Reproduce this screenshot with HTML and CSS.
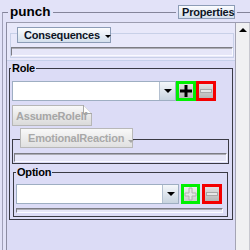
FILE: index.html
```html
<!DOCTYPE html>
<html lang="en">
<head>
    <meta charset="UTF-8">
    <title>punch</title>
    <link rel="stylesheet" href="styles.css">
</head>
<body>
    <div class="punch">
        <div class="punch-head">
            <span class="punch-title">punch</span>
            <span class="btn props">Properties</span>
        </div>
        <div class="scroll">
            <div class="content">
                <div class="band">
                    <div class="grp light">
                        <div class="grp-head conseq-head">
                            <span class="btn menu conseq">Consequences<i class="tri"></i></span>
                        </div>
                        <div class="slot"></div>
                    </div>
                </div>
                <div class="lower">
                    <div class="grp dark role">
                        <div class="grp-title">Role</div>
                        <div class="combo-row role-row">
                            <div class="combo"><span class="combo-field"></span><span class="combo-arrow"><i class="tri"></i></span></div>
                            <span class="sq add">
                                <svg width="14" height="14" viewBox="0 0 14 14"><path d="M7 1v12M1 7h12" stroke="#000" stroke-width="3"/></svg>
                            </span>
                            <span class="sq del">
                                <svg width="14" height="14" viewBox="0 0 14 14"><rect x="1.5" y="5.5" width="11" height="3" fill="#e6e6e6" stroke="#a8a8a8"/></svg>
                            </span>
                        </div>
                        <div class="note"><span class="note-text">AssumeRoleIf</span></div>
                        <div class="grp dark emo">
                            <div class="grp-head emo-head">
                                <span class="btn menu off emo-btn">EmotionalReaction<i class="tri"></i></span>
                            </div>
                            <div class="slot"></div>
                        </div>
                        <div class="grp dark option">
                            <div class="grp-title opt-title">Option</div>
                            <div class="combo-row opt-row">
                                <div class="combo"><span class="combo-field"></span><span class="combo-arrow"><i class="tri"></i></span></div>
                                <span class="sq add">
                                    <svg width="13" height="14" viewBox="0 0 13 14"><path d="M5 1h3v5h4v3H8v4H5V9H1V6h4z" fill="#e4e4e4" stroke="#b0b0b0"/></svg>
                                </span>
                                <span class="sq del">
                                    <svg width="14" height="14" viewBox="0 0 14 14"><rect x="1.5" y="5.5" width="11" height="3" fill="#e6e6e6" stroke="#a8a8a8"/></svg>
                                </span>
                            </div>
                            <div class="slot thin"></div>
                        </div>
                    </div>
                </div>
            </div>
            <div class="vbar">
                <div class="vbar-up"><i class="tri up"></i></div>
            </div>
        </div>
    </div>
</body>
</html>
```
FILE: styles.css
```css
* {
    box-sizing: border-box;
}
body {
    margin: 0;
    background-color: #e2e2f8;
    font-family: "Liberation Sans", Arial, sans-serif;
    font-size: 11px;
    font-weight: bold;
    letter-spacing: -0.2px;
    color: #000;
    overflow: hidden;
}
.punch {
    margin: 12px 0 0 2px;
    height: 238px;
    border-top: 1px solid #84849a;
    border-left: 1px solid #a0a0b8;
    display: flex;
    flex-direction: column;
}
.punch-head {
    display: flex;
    align-items: center;
    justify-content: space-between;
    height: 16px;
    margin-top: -9px;
    padding: 0 15px 0 5px;
}
.punch-title {
    font-size: 13.5px;
    line-height: 16px;
    padding: 0 2px;
    letter-spacing: 0;
    background-color: #e2e2f8;
}
.btn {
    display: inline-flex;
    align-items: center;
    border: 1px solid #8c9cb6;
    background: linear-gradient(#fbfcfe, #d4dfec);
    color: #0c1424;
}
.props {
    width: 57px;
    height: 14px;
    padding-left: 3px;
    box-shadow: 0 0 0 2px #e2e2f8;
}
.scroll {
    flex: 1;
    display: flex;
    margin: 2px 0 0 3px;
    border-top: 1px solid #9c9cb0;
    border-left: 1px solid #8c8ca2;
}
.content {
    flex: 1;
    display: flex;
    flex-direction: column;
}
.band {
    background-color: #e8e8fa;
    border-bottom: 1px solid #c6d0ea;
    padding: 10px 1px 2px 3px;
}
.lower {
    flex: 1;
    background-color: #dcdcf6;
    padding: 7px 2px 0 2px;
}
.grp {
    border: 1px solid;
}
.grp.light {
    border-color: #c8d0e8;
    padding-bottom: 1px;
}
.grp.dark {
    border-color: #3a3a44;
}
.grp-head {
    display: flex;
}
.conseq-head {
    margin-top: -7px;
    padding-left: 6px;
}
.menu {
    height: 16px;
    padding: 0 3px 0 6px;
}
.menu .tri {
    align-self: flex-end;
    margin: 0 0 4px 5px;
}
.conseq {
    width: 94px;
}
.tri {
    display: block;
    width: 0;
    height: 0;
    border-left: 3px solid transparent;
    border-right: 3px solid transparent;
    border-top: 3px solid #000;
}
.tri.up {
    border-left-width: 4px;
    border-right-width: 4px;
    border-top: none;
    border-bottom: 4px solid #000;
}
.slot {
    height: 9px;
    margin-top: 4px;
    border-top: 1px solid #7c7c84;
    border-left: 1px solid #7c7c84;
    border-right: 1px solid #fafaff;
    border-bottom: 1px solid #fafaff;
    box-shadow: inset 0 1px 0 #acacb4;
    background-color: #e6e6f8;
}
.role {
    padding-bottom: 2px;
}
.grp-title {
    width: fit-content;
    height: 13px;
    line-height: 13px;
    margin: -7px 0 0 1px;
    padding: 0 1px;
    background-color: #dcdcf6;
}
.combo-row {
    display: flex;
    height: 20px;
    margin-left: 2px;
}
.role-row {
    margin-top: 6px;
}
.combo {
    display: flex;
    width: 164px;
    border: 1px solid #9eaec2;
}
.combo-field {
    flex: 1;
    background-color: #fff;
}
.combo-arrow {
    width: 16px;
    display: flex;
    align-items: center;
    justify-content: center;
    border-left: 1px solid #b4c0d0;
    background: linear-gradient(#f4f7fa, #c9d4e0);
}
.combo-arrow .tri {
    border-left-width: 4px;
    border-right-width: 4px;
    border-top-width: 4px;
}
.sq {
    width: 20px;
    height: 20px;
    display: flex;
    align-items: center;
    justify-content: center;
    border: 3px solid;
    background: linear-gradient(#e2e2e2, #b6b6b6);
}
.sq.add {
    border-color: #00f000;
}
.sq.del {
    border-color: #f40000;
}
.note {
    position: relative;
    width: 80px;
    height: 21px;
    margin: 4px 0 0 2px;
    padding: 3px 0 0 3px;
    line-height: 15px;
    border: 1px solid #b6b6b6;
    background: linear-gradient(#f8f8f8, #dadada);
    color: #a6a6a6;
}
.note::after {
    content: '';
    position: absolute;
    top: -1px;
    right: -1px;
    width: 8px;
    height: 8px;
    border-left: 1px solid #a8a8a8;
    border-bottom: 1px solid #a8a8a8;
    background: linear-gradient(to bottom left, #dcdcf6 50%, #a8a8a8 50%, #fdfdfd 60%);
}
.note-text {
    position: relative;
    z-index: 1;
}
.emo {
    width: 217px;
    margin: 13px 0 0 2px;
    padding-bottom: 1px;
}
.emo-head {
    margin-top: -12px;
    padding-left: 7px;
}
.emo-btn {
    width: 113px;
    height: 20px;
    padding-left: 7px;
}
.off {
    border-color: #b8b8b8;
    background: linear-gradient(#f8f8f8, #e0e0e0);
    color: #a8a8a8;
}
.off .tri {
    border-top-color: #a8a8a8;
    margin-left: 4px;
}
.emo .slot {
    margin: 5px 1px 0 1px;
}
.option {
    width: 215px;
    margin: 8px 0 0 3px;
    padding-bottom: 3px;
}
.opt-title {
    margin-left: 2px;
}
.opt-row {
    margin-top: 5px;
}
.opt-row .combo {
    width: 163px;
}
.opt-row .sq {
    margin-left: 2px;
}
.opt-row .sq.add {
    width: 19px;
    background: linear-gradient(#eeeeee, #cccccc);
}
.slot.thin {
    height: 5px;
    margin: 4px 4px 0 2px;
}
.vbar {
    width: 15px;
    border-left: 1px solid #a4a4b4;
    border-right: 1px solid #c8c8d0;
    background-color: #f0f0f2;
}
.vbar-up {
    height: 14px;
    display: flex;
    align-items: center;
    justify-content: center;
}
```
